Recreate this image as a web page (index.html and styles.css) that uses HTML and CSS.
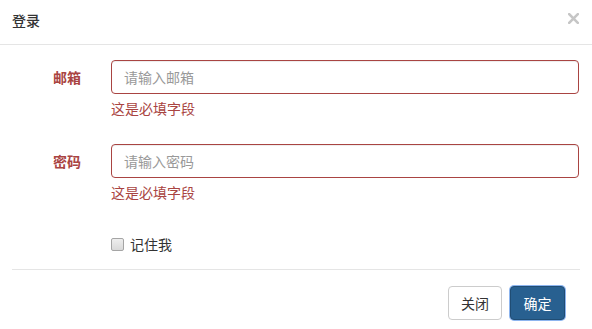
FILE: index.html
```html
<!DOCTYPE html>
<html lang="zh-CN">
<head>
<meta charset="utf-8">
<title>登录</title>
<link rel="stylesheet" href="styles.css">
</head>
<body>
<div class="modal">
  <div class="modal-header">
    <h4 class="modal-title">登录</h4>
    <button class="close" type="button" aria-label="关闭">
      <svg width="11" height="11" viewBox="0 0 11 11"><path d="M1.2 1.2 L9.8 9.8 M9.8 1.2 L1.2 9.8" stroke="#c6c6c6" stroke-width="2.6" stroke-linecap="square"/></svg>
    </button>
  </div>
  <form class="modal-body">
    <div class="form-group">
      <label class="control-label">邮箱</label>
      <div class="field">
        <input class="form-control" type="text" placeholder="请输入邮箱">
        <span class="help-block">这是必填字段</span>
      </div>
    </div>
    <div class="form-group">
      <label class="control-label">密码</label>
      <div class="field">
        <input class="form-control" type="password" placeholder="请输入密码">
        <span class="help-block">这是必填字段</span>
      </div>
    </div>
    <div class="form-group check-row">
      <div></div>
      <label class="checkbox"><input type="checkbox"><span>记住我</span></label>
    </div>
  </form>
  <div class="modal-footer">
    <button type="button" class="btn btn-default">关闭</button>
    <button type="button" class="btn btn-primary">确定</button>
  </div>
</div>
</body>
</html>
```
FILE: styles.css
```css
* { box-sizing: border-box; }
html, body {
  margin: 0;
  padding: 0;
  background: #fff;
}
body {
  font-family: "Noto Sans CJK SC", "Liberation Sans", sans-serif;
  font-size: 14px;
  line-height: 20px;
  color: #333;
}
.modal {
  width: 592px;
  height: 329px;
  overflow: hidden;
}
.modal-header {
  display: flex;
  justify-content: space-between;
  align-items: flex-start;
  padding: 10px 12px 14px 12px;
  border-bottom: 1px solid #e5e5e5;
}
.modal-title {
  margin: 0;
  font-size: 14px;
  line-height: 20px;
  font-weight: 500;
  color: #333;
}
.close {
  border: 0;
  background: none;
  padding: 0;
  margin: 3px 1px 0 0;
  width: 11px;
  height: 11px;
  display: block;
}
.close svg { display: block; }
.modal-body {
  margin: 0;
  padding: 15px 13px 0 0;
}
.form-group {
  display: grid;
  grid-template-columns: 81px 1fr;
  column-gap: 30px;
  margin-bottom: 16px;
}
.control-label {
  text-align: right;
  font-weight: bold;
  color: #a94442;
  line-height: 34px;
}
.field {
  display: flex;
  flex-direction: column;
}
.form-control {
  display: block;
  width: 100%;
  height: 34px;
  padding: 6px 12px;
  font-family: inherit;
  font-size: 14px;
  line-height: 20px;
  color: #555;
  background: #fff;
  border: 1px solid #a94442;
  border-radius: 4px;
  box-shadow: inset 0 1px 1px rgba(0,0,0,.075);
  outline: none;
}
.form-control::placeholder { color: #999; }
.help-block {
  display: block;
  margin-top: 4px;
  margin-bottom: 10px;
  color: #a94442;
  line-height: 20px;
}
.check-row {
  padding-top: 6px;
  margin-bottom: 15px;
}
.checkbox {
  display: flex;
  align-items: center;
  gap: 6px;
  line-height: 20px;
  color: #333;
}
.checkbox input {
  -webkit-appearance: none;
  appearance: none;
  margin: 1px 0 0 0;
  width: 13px;
  height: 13px;
  border: 1px solid #a5a5a5;
  border-radius: 2px;
  background: linear-gradient(#eeeeee, #d9d9d9);
}
.modal-footer {
  margin: 0 12px;
  border-top: 1px solid #e5e5e5;
  padding: 16px 15px 15px 15px;
  display: flex;
  justify-content: flex-end;
  gap: 8px;
}
.btn {
  height: 34px;
  padding: 6px 12px;
  font-family: inherit;
  font-size: 14px;
  line-height: 20px;
  border-radius: 4px;
  border: 1px solid transparent;
}
.btn-default {
  color: #333;
  background: #fff;
  border-color: #ccc;
  width: 54px;
}
.btn-primary {
  color: #fff;
  background: #286090;
  border-color: #204d74;
  width: 55px;
  box-shadow: 0 0 0 1px #8db5ef;
}
```
